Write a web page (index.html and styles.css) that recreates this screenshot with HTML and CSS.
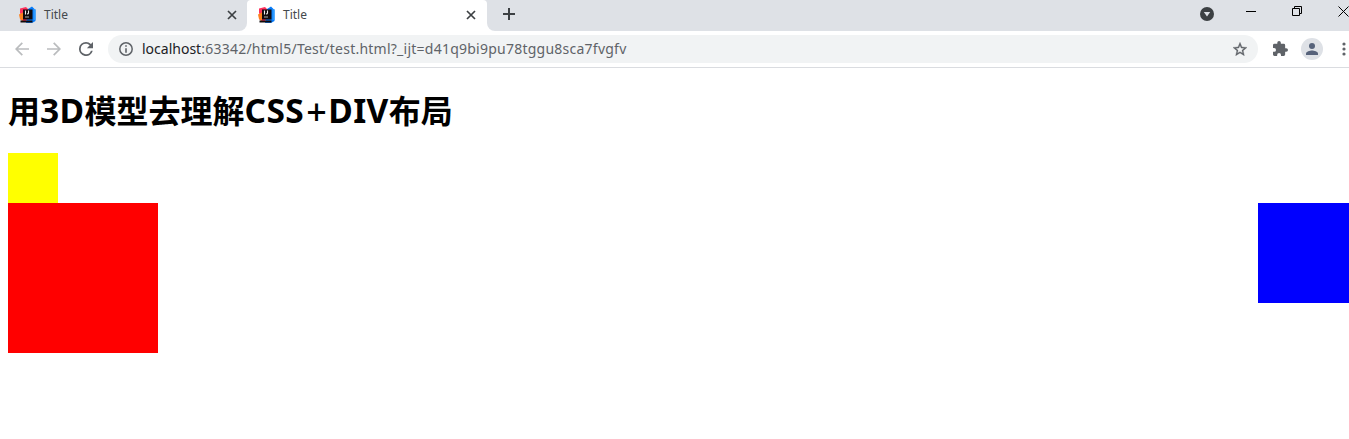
FILE: index.html
```html
<!DOCTYPE html>
<html lang="zh">
<head>
<meta charset="utf-8">
<title>Title</title>
<link rel="stylesheet" href="styles.css">
</head>
<body>
<svg class="defs" width="0" height="0">
  <symbol id="fav" viewBox="0 0 18 18">
    <path fill="#fe315d" d="M1 2.500 7 1l3 3v9l-5 3-4-3 1-4-1-2z"/>
    <path fill="#fc801d" d="M0 8.500 4 6.500v9L1 13z"/>
    <path fill="#087cfa" d="M9 3 13 .500 16.500 4v11L13 17H7l1-5z"/>
    <path fill="#2c9bff" d="M14.500 3h2v11h-2z"/>
    <path fill="#100a0c" d="M4 3.500h9.500v10H4zM1.500 14.500h12v2h-12z"/>
    <path stroke="#eee" stroke-width="1.100" fill="none" d="M6.500 4.500v4M9.500 4.500V7q0 1-1.500 1"/>
    <path fill="#aaa" d="M6 10.500h4v1H6z"/>
  </symbol>
  <symbol id="x" viewBox="0 0 10 10"><path stroke="#3c4043" stroke-width="1.700" d="m1 1 8 8M9 1 1 9"/></symbol>
</svg>
<header class="tabs">
  <div class="tab">
    <svg class="fav"><use href="#fav"/></svg><span>Title</span><svg class="close"><use href="#x"/></svg>
  </div>
  <div class="tab active">
    <svg class="fav"><use href="#fav"/></svg><span>Title</span><svg class="close"><use href="#x"/></svg>
  </div>
  <div class="strip">
    <svg class="plus" viewBox="0 0 12 12"><path stroke="#3c4043" stroke-width="2" d="M6 0v12M0 6h12"/></svg>
    <svg class="search" viewBox="0 0 14 14"><circle cx="7" cy="7" r="7" fill="#3c4043"/><path fill="#dee1e6" d="M3.800 5h6.400L7 9.500z"/></svg>
    <svg class="min" viewBox="0 0 10 11"><path fill="#000" d="M0 5h10v1H0z"/></svg>
    <svg class="max" viewBox="0 0 10 10"><path fill="none" stroke="#000" d="M.5 2.500h7v7h-7zM2.500 2.500v-2h7v7h-2"/></svg>
    <svg class="quit" viewBox="0 0 11 11"><path stroke="#000" d="m.5.500 10 10m0-10-10 10"/></svg>
  </div>
</header>
<nav class="toolbar">
  <svg class="back" viewBox="0 0 14 14"><path fill="none" stroke="#babcbe" stroke-width="1.700" d="M14 7H1.500M7.300.800 1.200 7l6.100 6.200"/></svg>
  <svg class="fwd" viewBox="0 0 14 14"><path fill="none" stroke="#babcbe" stroke-width="1.700" d="M0 7h12.500M6.700.800 12.800 7l-6.100 6.200"/></svg>
  <svg class="reload" viewBox="4 4 16 16"><path fill="#5f6368" d="M17.650 6.350A7.960 7.960 0 0 0 12 4a8 8 0 1 0 7.730 10h-2.080A6 6 0 1 1 12 6c1.660 0 3.140.690 4.220 1.780L13 11h7V4z"/></svg>
  <div class="omnibox">
    <svg class="info" viewBox="0 0 14 14"><circle cx="7" cy="7" r="6.200" fill="none" stroke="#5f6368" stroke-width="1.500"/><path fill="#5f6368" d="M6.200 3.200h1.600v1.600H6.200zM6.200 6.200h1.600v4.500H6.200z"/></svg>
    <span class="url"><b>localhost</b>:63342/html5/Test/test.html?_ijt=d41q9bi9pu78tggu8sca7fvgfv</span>
    <svg class="star" viewBox="2 2 20 19"><path fill="#5f6368" stroke="#5f6368" stroke-width=".5" d="m22 9.240-7.190-.62L12 2 9.190 8.630 2 9.240l5.460 4.730L5.820 21 12 17.270 18.180 21l-1.630-7.030zM12 15.400l-3.760 2.270 1-4.280-3.320-2.880 4.380-.38L12 6.100l1.710 4.040 4.380.38-3.320 2.880 1 4.280z"/></svg>
  </div>
  <svg class="puzzle" viewBox="2 1 21 21"><path fill="#5f6368" d="M20.500 11H19V7a2 2 0 0 0-2-2h-4V3.500a2.500 2.500 0 0 0-5 0V5H4a2 2 0 0 0-2 2v3.800h1.500a2.700 2.700 0 0 1 0 5.400H2V20a2 2 0 0 0 2 2h3.800v-1.500a2.700 2.700 0 0 1 5.400 0V22H17a2 2 0 0 0 2-2v-4h1.500a2.500 2.500 0 0 0 0-5z"/></svg>
  <svg class="avatar" viewBox="0 0 22 22"><circle cx="11" cy="11" r="11" fill="#dee1e6"/><g fill="#56627a"><circle cx="11" cy="8" r="3"/><path d="M5 17v-1.500C5 13.500 9 12.500 11 12.500s6 1 6 3V17z"/></g></svg>
  <svg class="more" viewBox="0 0 4 14"><g fill="#5f6368"><circle cx="2" cy="2" r="1.600"/><circle cx="2" cy="7" r="1.600"/><circle cx="2" cy="12" r="1.600"/></g></svg>
</nav>
<main class="page">
  <h1>用<span class="latin">3D</span>模型去理解<span class="latin">CSS<span class="plus-sign">+</span>DIV</span>布局</h1>
  <div class="yellow"></div>
  <div class="row"><div class="red"></div><div class="blue"></div></div>
</main>
</body>
</html>
```
FILE: styles.css
```css
* { box-sizing: border-box; }
body { margin: 0; height: 439px; overflow: hidden; background: #fff; font-family: "Noto Sans", "Noto Sans CJK SC", sans-serif; }
svg { display: block; flex: none; }
.defs { position: absolute; }
.tabs { display: flex; height: 31px; background: linear-gradient(#dee1e6 10px, #fff 10px); }
.tab { display: flex; align-items: center; width: 247px; height: 31px; padding: 0 10px 2px 19px; background: #dee1e6; border-radius: 0 0 8px 0; font-size: 12px; color: #45494d; }
.tab.active { width: 240px; padding: 0 11px 2px 11px; background: #fff; border-radius: 4px 4px 0 0; }
.fav { width: 18px; height: 18px; margin-right: 7px; }
.close { width: 10px; height: 10px; margin-left: auto; }
.strip { display: flex; flex: 1; height: 31px; background: #dee1e6; border-radius: 0 0 0 8px; }
.plus { width: 12px; height: 12px; margin: 8px 0 0 16px; }
.search { width: 14px; height: 14px; margin: 7px 0 0 685px; }
.min { width: 10px; height: 11px; margin: 6px 0 0 32px; }
.max { width: 10px; height: 10px; margin: 6px 0 0 36px; }
.quit { width: 11px; height: 11px; margin: 6px 0 0 36px; }
.toolbar { display: flex; align-items: center; height: 37px; padding-left: 15px; border-bottom: 1px solid #dadce0; overflow: hidden; }
.back, .fwd { width: 14px; height: 14px; }
.fwd { margin-left: 18px; }
.reload { width: 14px; height: 14px; margin-left: 18px; }
.omnibox { display: flex; flex: none; align-items: center; width: 1150px; height: 28px; margin-left: 15px; padding: 0 11px; border-radius: 14px; background: #f1f3f4; }
.info { width: 14px; height: 14px; }
.url { margin-left: 9px; font-size: 14px; line-height: 20px; letter-spacing: .24px; color: #5f6368; white-space: nowrap; }
.url b { font-weight: 400; letter-spacing: 0; color: #202124; }
.star { width: 14px; height: 14px; margin-left: auto; }
.puzzle { width: 15px; height: 15px; margin: 0 0 1px 15px; }
.avatar { width: 22px; height: 22px; margin-left: 13px; }
.more { width: 4px; height: 14px; margin-left: 19px; }
.page { padding: 21px 8px 0; }
h1 { height: 43px; margin: 0 0 21px; font-size: 32px; line-height: 43px; font-weight: 700; white-space: nowrap; color: #000; }
.latin { font-size: 33.5px; line-height: 1; letter-spacing: .4px; }
.plus-sign { margin: 0 1.5px 0 2px; font-size: 36px; line-height: 0; letter-spacing: 0; font-weight: 500; vertical-align: -2px; }
.yellow { width: 50px; height: 50px; background: #ff0; }
.row { display: flex; justify-content: space-between; width: 1350px; }
.red { width: 150px; height: 150px; background: #f00; }
.blue { width: 100px; height: 100px; background: #00f; }
```
